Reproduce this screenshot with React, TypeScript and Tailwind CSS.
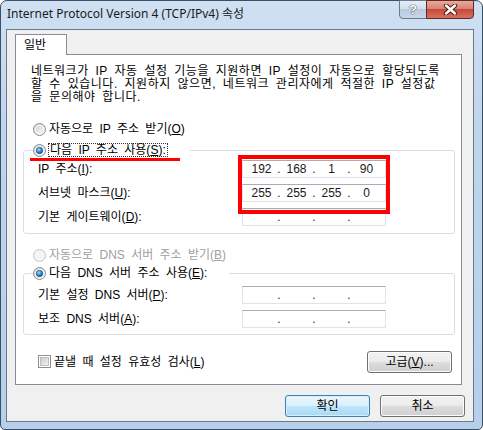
import React from 'react'

const KO = "font-['Liberation_Sans','Noto_Sans_CJK_KR',sans-serif]"

function Radio({ checked, disabled }: { checked?: boolean; disabled?: boolean }) {
  return (
    <svg width="13" height="13" viewBox="0 0 13 13" className="shrink-0">
      <defs>
        <linearGradient id="rbg" x1="0" y1="0" x2="1" y2="1">
          <stop offset="0" stopColor="#cfcfcf" />
          <stop offset="1" stopColor="#fbfbfb" />
        </linearGradient>
        <radialGradient id="rdot" cx="0.4" cy="0.35" r="0.75">
          <stop offset="0" stopColor="#9fe0ff" />
          <stop offset="0.55" stopColor="#2b86cc" />
          <stop offset="1" stopColor="#0c3b6c" />
        </radialGradient>
      </defs>
      <circle
        cx="6.5"
        cy="6.5"
        r="6"
        fill={disabled ? '#f4f4f4' : 'url(#rbg)'}
        stroke={disabled ? '#c4c4c4' : '#8c8f91'}
      />
      {!disabled && <circle cx="6.5" cy="6.5" r="4.2" fill="none" stroke="#ffffff" strokeOpacity="0.7" />}
      {checked && <circle cx="6.5" cy="6.5" r="3.2" fill="url(#rdot)" stroke="#1d4f80" strokeWidth="0.6" />}
    </svg>
  )
}

function Checkbox() {
  return (
    <svg width="13" height="13" viewBox="0 0 13 13" className="shrink-0">
      <defs>
        <linearGradient id="cbg" x1="0" y1="0" x2="1" y2="1">
          <stop offset="0" stopColor="#c9c9c9" />
          <stop offset="1" stopColor="#f4f4f4" />
        </linearGradient>
      </defs>
      <rect x="0.5" y="0.5" width="12" height="12" fill="#ffffff" stroke="#8e8f8f" />
      <rect x="2.5" y="2.5" width="8" height="8" fill="url(#cbg)" stroke="#b5b5b5" strokeWidth="0.8" />
    </svg>
  )
}

function IpField({ parts }: { parts?: string[] }) {
  const p = parts ?? ['', '', '', '']
  return (
    <div className="flex h-[18px] w-[144px] items-center border border-[#e2e3ea] border-t-[#abadb3] bg-white pl-[3px] text-[12px] leading-none text-[#1a1a1a] [word-spacing:0]">
      {p.map((v, i) => (
        <React.Fragment key={i}>
          {i > 0 && <span className="w-[4px] text-center">.</span>}
          <span className="w-[31px] text-center">{v}</span>
        </React.Fragment>
      ))}
    </div>
  )
}

function Btn({ children, primary }: { children: React.ReactNode; primary?: boolean }) {
  return (
    <button
      className={
        primary
          ? 'h-[22px] w-[85px] rounded-[3px] border border-[#3c7fb1] bg-[linear-gradient(#eaf6fd_0%,#d9f0fc_50%,#bee6fd_50%,#a7d9f5_100%)] text-[12px] text-black shadow-[inset_0_0_0_1px_#d7eefb]'
          : 'h-[22px] w-[85px] rounded-[3px] border border-[#707070] bg-[linear-gradient(#f2f2f2_0%,#ebebeb_50%,#dddddd_50%,#cfcfcf_100%)] text-[12px] text-black shadow-[inset_0_0_0_1px_#fcfcfc]'
      }
    >
      {children}
    </button>
  )
}

export default function App() {
  return (
    <div className={`relative h-[430px] w-[483px] overflow-hidden bg-white ${KO}`}>
      <div className="flex h-full w-full flex-col rounded-t-[7px] rounded-b-[5px] border border-[#3b4f63] bg-[linear-gradient(180deg,#cfe0f3_0%,#bfd5ee_30%,#b6cfea_100%)] pb-[7px] pl-[5px] pr-[8px]">
        {/* title bar */}
        <div className="flex h-[28px] items-start">
          <div className="pl-[1px] pt-[5px] font-['Noto_Sans','Noto_Sans_CJK_KR',sans-serif] text-[12px] leading-[16px] text-[#1b1b1b]">
            Internet Protocol Version 4 (TCP/IPv4) 속성
          </div>
          <div className="ml-auto -mt-px flex">
            <div className="flex h-[19px] w-[28px] items-center justify-center rounded-bl-[4px] border border-[#6a7b8f] bg-[linear-gradient(#e6eef7_0%,#d3dfec_45%,#b9cade_50%,#c8d7e7_100%)] text-[13px] font-bold leading-none text-white [text-shadow:0_0_1px_#333,0_0_1px_#333]">
              ?
            </div>
            <div className="-ml-px flex h-[19px] w-[48px] items-center justify-center rounded-br-[4px] border border-[#5b2b25] bg-[linear-gradient(#e9a99b_0%,#d88474_45%,#c74a38_50%,#d7705f_100%)]">
              <svg width="15" height="11" viewBox="0 0 15 11">
                <path d="M3 1.5 L12 9.5 M12 1.5 L3 9.5" stroke="#4a1a14" strokeWidth="4.4" strokeLinecap="round" fill="none" />
                <path d="M3 1.5 L12 9.5 M12 1.5 L3 9.5" stroke="#ffffff" strokeWidth="2.4" strokeLinecap="round" fill="none" />
              </svg>
            </div>
          </div>
        </div>

        {/* client area */}
        <div className="flex flex-1 flex-col border border-[#6b7a8b] bg-[#f0f0f0] pt-[4px] text-[12px] text-black [word-spacing:3px]">
          <div className="relative z-10 -mb-px ml-[8px] flex h-[21px] w-[52px] items-center border border-b-0 border-[#898c95] bg-white pl-[8px] leading-[12px]">
            일반
          </div>
          <div className="ml-[8px] flex w-[447px] flex-col border border-[#898c95] bg-white pb-[12px] pt-[10px]">
            {/* description */}
            <div className="pl-[15px] leading-[13px] tracking-[0.5px]">
              <div className="h-[13px] whitespace-nowrap">네트워크가 IP 자동 설정 기능을 지원하면 IP 설정이 자동으로 할당되도록</div>
              <div className="h-[13px] whitespace-nowrap">할 수 있습니다. 지원하지 않으면, 네트워크 관리자에게 적절한 IP 설정값</div>
              <div className="h-[13px] whitespace-nowrap">을 문의해야 합니다.</div>
            </div>

            <div className="ml-[17px] mt-[18px] flex h-[14px] items-center gap-[3px] leading-[12px]">
              <Radio />
              <span>
                자동으로 IP 주소 받기(<u>O</u>)
              </span>
            </div>

            <fieldset className="ml-[7px] mt-[7px] w-[432px] rounded-[3px] border border-[#d5dfe5] pb-[7px] pt-[3px]">
              <legend className="ml-[9px] pr-[22px]">
                <div className="flex h-[14px] items-center gap-[2px] leading-[12px]">
                  <Radio checked />
                  <span className="border border-dotted border-[#333] px-px">
                    다음 IP 주소 사용(<u>S</u>):
                  </span>
                </div>
              </legend>
              <div className="grid grid-cols-[204px_144px] items-center gap-y-[6px] pl-[14px] leading-[12px]">
                <span>
                  IP 주소(<u>I</u>):
                </span>
                <IpField parts={['192', '168', '1', '90']} />
                <span>
                  서브넷 마스크(<u>U</u>):
                </span>
                <IpField parts={['255', '255', '255', '0']} />
                <span>
                  기본 게이트웨이(<u>D</u>):
                </span>
                <IpField />
              </div>
            </fieldset>

            <div className="ml-[17px] mt-[14px] flex h-[14px] items-center gap-[3px] leading-[12px] text-[#a0a0a0]">
              <Radio disabled />
              <span>
                자동으로 DNS 서버 주소 받기(<u>B</u>)
              </span>
            </div>

            <fieldset className="ml-[7px] mt-[4px] w-[432px] rounded-[3px] border border-[#d5dfe5] pb-[6px] pt-[6px]">
              <legend className="ml-[9px] pr-[22px]">
                <div className="flex h-[14px] items-center gap-[3px] leading-[12px]">
                  <Radio checked />
                  <span>
                    다음 DNS 서버 주소 사용(<u>E</u>):
                  </span>
                </div>
              </legend>
              <div className="grid grid-cols-[204px_144px] items-center gap-y-[6px] pl-[14px] leading-[12px]">
                <span>
                  기본 설정 DNS 서버(<u>P</u>):
                </span>
                <IpField />
                <span>
                  보조 DNS 서버(<u>A</u>):
                </span>
                <IpField />
              </div>
            </fieldset>

            <div className="mt-[16px] flex h-[21px] items-center pl-[22px] pr-[9px] leading-[12px]">
              <Checkbox />
              <span className="ml-[3px]">
                끝낼 때 설정 유효성 검사(<u>L</u>)
              </span>
              <div className="ml-auto">
                <Btn>
                  고급(<u>V</u>)...
                </Btn>
              </div>
            </div>
          </div>

          <div className="mt-[10px] flex justify-end gap-[10px] pr-[8px]">
            <Btn primary>확인</Btn>
            <Btn>취소</Btn>
          </div>
        </div>
      </div>

      {/* red annotations */}
      <div className="absolute left-[30px] top-[158px] h-[3px] w-[150px] bg-[#ff0000]" />
      <div className="absolute left-[238px] top-[155px] h-[59px] w-[152px] border-4 border-[#ff0000]" />
    </div>
  )
}
